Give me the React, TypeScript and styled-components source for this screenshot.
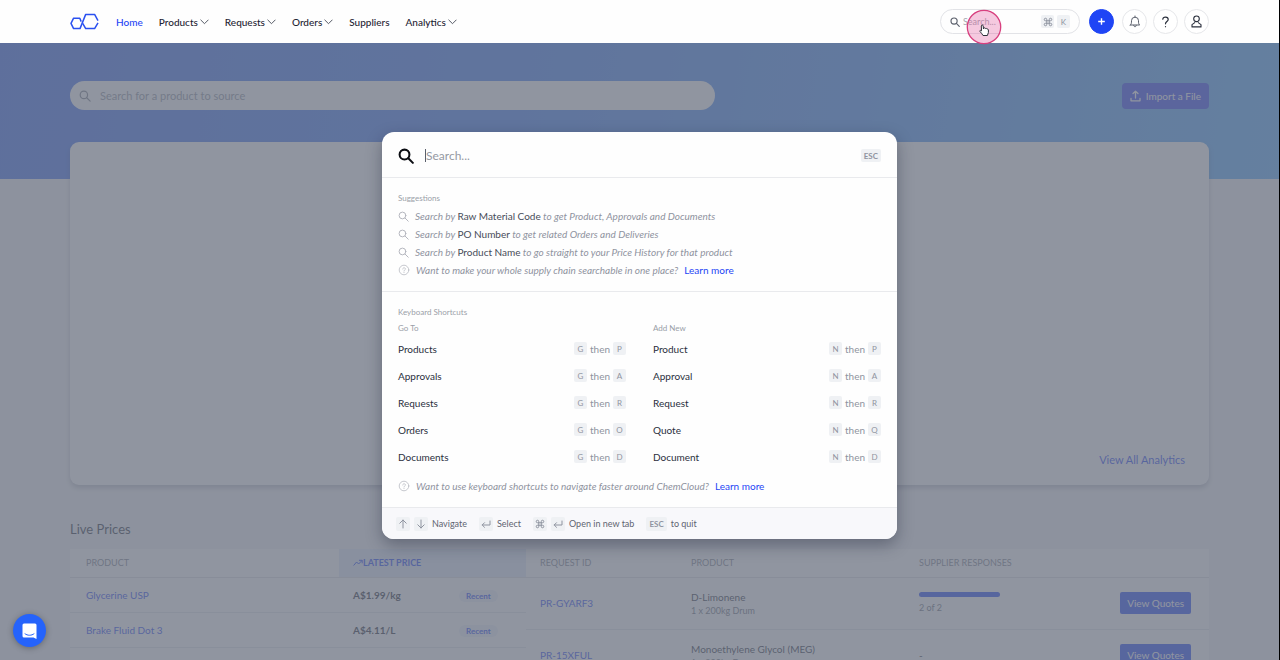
import React from "react";
import styled, { createGlobalStyle, css } from "styled-components";

const brand = "#1f45f5";

const GlobalStyle = createGlobalStyle`
  *, *::before, *::after { box-sizing: border-box; }
  html, body { margin: 0; padding: 0; }
  body {
    font-family: Lato, "Liberation Sans", sans-serif;
    font-size: 10px;
    line-height: 14px;
    color: #2a2f3d;
    background: #f3f4f6;
  }
  button, input { font-family: inherit; }
  a { text-decoration: none; color: inherit; }
`;

const Page = styled.div`
  position: relative;
  height: 100vh;
  overflow: hidden;
  border-right: 1px solid #000;
`;

/* ---------- top bar ---------- */

const TopBar = styled.header`
  display: flex;
  align-items: center;
  height: 43px;
  padding: 0 70px;
  background: #fefefe;
`;

const LogoLink = styled.a`
  display: flex;
  margin-right: 17px;
`;

const Nav = styled.nav`
  display: flex;
  align-items: center;
  gap: 16px;
  flex: 1;
`;

const NavLink = styled.a<{ $active?: boolean }>`
  display: flex;
  align-items: center;
  gap: 2px;
  font-size: 10px;
  font-weight: 500;
  color: ${(p) => (p.$active ? brand : "#1f2433")};
`;

const Tools = styled.div`
  display: flex;
  align-items: center;
  gap: 6px;
`;

const QuickSearch = styled.label`
  display: flex;
  align-items: center;
  gap: 3px;
  width: 140px;
  height: 25px;
  margin-right: 3px;
  padding: 0 9px;
  border: 1px solid #e2e3e7;
  border-radius: 13px;
  color: #5b606c;
`;

const QuickInput = styled.input`
  flex: 1;
  min-width: 0;
  padding: 0;
  border: 0;
  outline: 0;
  background: transparent;
  font-size: 9px;
  &::placeholder { color: #a3a7b0; opacity: 1; }
`;

const RoundButton = styled.button<{ $primary?: boolean }>`
  display: flex;
  align-items: center;
  justify-content: center;
  width: 25px;
  height: 25px;
  padding: 0;
  border: 1px solid #e6e7ea;
  border-radius: 50%;
  background: #fff;
  color: #2a2f3c;
  ${(p) =>
    p.$primary &&
    css`
      margin-right: 2px;
      border-color: ${brand};
      background: ${brand};
      color: #fff;
    `}
`;

const Keycap = styled.kbd<{ $wide?: boolean; $large?: boolean }>`
  display: inline-flex;
  align-items: center;
  justify-content: center;
  flex: none;
  min-width: ${(p) => (p.$large ? 14 : 13)}px;
  height: ${(p) => (p.$large ? 14 : 13)}px;
  padding: ${(p) => (p.$wide ? "0 3px" : "0")};
  border-radius: 2px;
  background: #eff1f4;
  color: #8f94a0;
  font-family: inherit;
  font-size: 8px;
  font-weight: ${(p) => (p.$wide ? 700 : 400)};
  line-height: 14px;
`;

/* ---------- dashboard ---------- */

const Dashboard = styled.main`
  padding: 38px 70px 0;
  background: linear-gradient(100deg, #3b6aef 0%, #4280f2 45%, #53aafa 100%) top / 100% 136px no-repeat;
`;

const SourceBar = styled.div`
  display: flex;
  align-items: center;
  justify-content: space-between;
  margin-bottom: 32px;
`;

const SourceSearch = styled.label`
  display: flex;
  align-items: center;
  gap: 9px;
  width: 645px;
  height: 29px;
  padding: 0 9px;
  border-radius: 15px;
  background: #fff;
  color: #7c818d;
`;

const SourceInput = styled.input`
  flex: 1;
  padding: 0;
  border: 0;
  outline: 0;
  background: transparent;
  font-size: 11px;
  &::placeholder { color: #8f95a1; opacity: 1; }
`;

const ImportButton = styled.button`
  display: flex;
  align-items: center;
  gap: 5px;
  height: 26px;
  padding: 0 8px;
  border: 0;
  border-radius: 4px;
  background: #2c40f2;
  color: #fff;
  font-size: 10px;
`;

const AnalyticsCard = styled.section`
  display: flex;
  align-items: flex-end;
  justify-content: flex-end;
  min-height: 343px;
  padding: 17px 24px;
  border-radius: 9px;
  background: #fff;
  box-shadow: 0 3px 5px rgba(20, 25, 50, 0.25);
`;

const AnalyticsLink = styled.a`
  font-size: 11px;
  line-height: 16px;
  color: ${brand};
`;

const SectionTitle = styled.h2`
  margin: 34px 0 10px;
  font-size: 13px;
  font-weight: 400;
  line-height: 20px;
`;

const Tables = styled.div`
  display: grid;
  grid-template-columns: 456fr 683fr;
`;

const Table = styled.table`
  width: 100%;
  height: 0;
  border-collapse: collapse;
  table-layout: fixed;
  background: #fff;
`;

const HeadCell = styled.th<{ $active?: boolean }>`
  height: 28px;
  padding: 0 14px 0 ${(p) => (p.$active ? 14 : 16)}px;
  border-bottom: 1px solid #dddfe4;
  background: ${(p) => (p.$active ? "#e3e9fb" : "transparent")};
  color: ${(p) => (p.$active ? brand : "#7c818d")};
  font-size: 9px;
  font-weight: ${(p) => (p.$active ? 700 : 400)};
  text-align: left;
  text-transform: uppercase;
`;

const HeadLabel = styled.span`
  display: flex;
  align-items: center;
`;

const Cell = styled.td<{ $tall?: boolean; $end?: boolean; $first?: boolean }>`
  height: ${(p) => (p.$tall ? 52 : 35)}px;
  padding: 0 ${(p) => (p.$end ? 18 : 14)}px 0 ${(p) => (p.$first ? 16 : 14)}px;
  border-bottom: 1px solid #e3e5e9;
  text-align: ${(p) => (p.$end ? "right" : "left")};
`;

const RequestHead = styled(HeadCell)`
  padding-left: 14px;
`;

const ItemLink = styled.a`
  color: ${brand};
`;

const Price = styled.strong`
  font-weight: 700;
  color: #2a2e3a;
`;

const Pill = styled.span`
  display: inline-block;
  padding: 0 7px;
  border-radius: 6px;
  background: #eef2fc;
  color: ${brand};
  font-size: 8px;
  font-weight: 700;
  line-height: 12px;
`;

const Subtext = styled.div`
  color: #6b707c;
  font-size: 9px;
  line-height: 13px;
`;

const Bar = styled.div`
  width: 81px;
  height: 5px;
  margin-bottom: 4px;
  border-radius: 3px;
  background: ${brand};
`;

const QuoteButton = styled.button`
  height: 22px;
  padding: 0 7px;
  border: 0;
  border-radius: 2px;
  background: ${brand};
  color: #fff;
  font-size: 10px;
`;

/* ---------- command palette ---------- */

const Overlay = styled.div`
  position: absolute;
  inset: 43px 0 0;
  display: flex;
  align-items: flex-start;
  justify-content: center;
  padding-top: 89px;
  background: rgba(107, 114, 128, 0.75);
`;

const Palette = styled.div`
  width: 515px;
  overflow: hidden;
  border-radius: 12px;
  background: #fefefe;
  box-shadow: 0 6px 16px rgba(20, 26, 45, 0.35);
`;

const PaletteHead = styled.div`
  display: flex;
  align-items: center;
  gap: 11px;
  height: 46px;
  padding: 2px 16px 0;
  border-bottom: 1px solid #e9eaed;
`;

const PaletteLabel = styled.label`
  display: flex;
  align-items: center;
  flex: 1;
  color: #0b0d12;
`;

const Caret = styled.span`
  width: 1px;
  height: 13px;
  margin-left: 11px;
  background: #5b606c;
`;

const PaletteInput = styled.input`
  flex: 1;
  padding: 0;
  border: 0;
  outline: 0;
  background: transparent;
  font-size: 12px;
  &::placeholder { color: #9599a3; opacity: 1; }
`;

const Section = styled.section`
  padding: 12px 16px;
  border-bottom: 1px solid #e9eaed;
`;

const GroupTitle = styled.h3`
  margin: 0;
  color: #9a9ea8;
  font-size: 8px;
  font-weight: 400;
  line-height: 17px;
`;

const ColumnTitle = styled.h4`
  margin: 0;
  color: #9a9ea8;
  font-size: 8px;
  font-weight: 400;
  line-height: 14px;
`;

const Hint = styled.p`
  display: flex;
  align-items: center;
  gap: 6px;
  height: 18px;
  margin: 0;
  color: #b0b3bb;
  font-size: 10px;
  font-style: italic;
`;

const HintText = styled.span`
  white-space: pre;
  color: #8f939e;
`;

const Term = styled.span`
  color: #474c59;
  font-style: normal;
`;

const LearnMore = styled.a`
  color: ${brand};
  font-style: normal;
`;

const Columns = styled.div`
  display: grid;
  grid-template-columns: 1fr 1fr;
  column-gap: 27px;
  padding-bottom: 7px;
`;

const ShortcutRow = styled.div`
  display: flex;
  align-items: center;
  justify-content: space-between;
  height: 27px;
  font-size: 10px;
`;

const Combo = styled.span`
  display: flex;
  align-items: center;
  gap: 3px;
  color: #8f94a0;
`;

const PaletteFoot = styled.footer`
  display: flex;
  align-items: center;
  gap: 12px;
  height: 31px;
  padding: 0 14px;
  background: #f8f8fb;
  color: #5f6471;
  font-size: 9px;
`;

const FootItem = styled.span`
  display: flex;
  align-items: center;
  gap: 4px;
`;

/* ---------- floating items ---------- */

const ChatButton = styled.button`
  position: absolute;
  left: 13px;
  bottom: 13px;
  display: flex;
  align-items: center;
  justify-content: center;
  width: 33px;
  height: 33px;
  padding: 0;
  border: 0;
  border-radius: 50%;
  background: #2563fb;
  box-shadow: 0 1px 6px rgba(0, 0, 0, 0.3);
`;

const Pointer = styled.div`
  position: absolute;
  top: 9px;
  right: 277px;
  width: 36px;
  height: 36px;
  pointer-events: none;
`;

/* ---------- icons ---------- */

const Logo = () => (
  <svg width="29" height="17" viewBox="0 0 29 17" fill="none" stroke="#2a50f0" strokeWidth="1.5" strokeLinejoin="round" aria-hidden="true">
    <path d="M11.2 8.6 9.8 5.2H3.6L1 10.3l2.6 5.3H10L15.7 1.4h8.9L28 7.6" />
    <path d="m12.7 10.4 3 5.2h8.9L28 9.8" />
  </svg>
);

const Chevron = () => (
  <svg width="9" height="6" viewBox="0 0 9 6" fill="none" stroke="#555a66" strokeWidth="1" strokeLinecap="round" aria-hidden="true">
    <path d="M.8 1 4.5 4.7 8.2 1" />
  </svg>
);

const Magnifier = ({ size, weight }: { size: number; weight: number }) => (
  <svg width={size} height={size} viewBox="0 0 14 14" fill="none" stroke="currentColor" strokeWidth={weight} strokeLinecap="round" aria-hidden="true">
    <circle cx="5.7" cy="5.7" r="4.3" />
    <path d="m9 9 4 4" />
  </svg>
);

const Question = () => (
  <svg width="12" height="12" viewBox="0 0 12 12" fill="none" stroke="#b7bac2" strokeWidth=".8" strokeLinecap="round" aria-hidden="true">
    <circle cx="6" cy="6" r="4.8" />
    <path d="M4.7 5c0-1.7 2.7-1.7 2.7 0C7.4 6 6 6 6 7M6 8.4v.1" />
  </svg>
);

const Plus = () => (
  <svg width="9" height="9" viewBox="0 0 9 9" stroke="currentColor" strokeWidth="1.4" aria-hidden="true">
    <path d="M4.5 1.2v6.6M1.2 4.5h6.6" />
  </svg>
);

const Bell = () => (
  <svg width="12" height="13" viewBox="0 0 12 13" fill="none" stroke="#5b606c" strokeWidth="1" strokeLinejoin="round" strokeLinecap="round" aria-hidden="true">
    <path d="M6 1v1M1.3 10h9.4C9.5 9 9.5 8 9.5 5.7a3.5 3.5 0 0 0-7 0C2.5 8 2.5 9 1.3 10ZM4.7 10.3c0 2 2.6 2 2.6 0" />
  </svg>
);

const HelpMark = () => (
  <svg width="9" height="12" viewBox="0 0 9 12" fill="none" stroke="currentColor" strokeWidth="1.2" strokeLinecap="round" aria-hidden="true">
    <path d="M1.8 3.2c.3-2.8 5.4-2.7 5.4.3C7.2 5.5 4.5 5.6 4.5 7.8M4.5 10.5v.2" />
  </svg>
);

const Person = () => (
  <svg width="13" height="13" viewBox="0 0 13 13" fill="none" stroke="currentColor" strokeWidth="1.1" strokeLinejoin="round" aria-hidden="true">
    <circle cx="6.5" cy="3.8" r="2.8" />
    <path d="M5.1 7.4 2 9.6v2.3h9V9.6L7.900 7.400" />
  </svg>
);

const Upload = () => (
  <svg width="11" height="12" viewBox="0 0 11 12" fill="none" stroke="currentColor" strokeWidth="1.3" strokeLinecap="round" strokeLinejoin="round" aria-hidden="true">
    <path d="M5.5 8V1.3M3 3.5l2.5-2.3L8 3.5M1 8.5v2.3h9V8.5" />
  </svg>
);

const Trend = () => (
  <svg width="10" height="8" viewBox="0 0 10 8" fill="none" stroke="currentColor" strokeWidth="1" aria-hidden="true">
    <path d="m.6 6.5 3-3.5 2 2L9 1.5M6 1.3h3.2v3" />
  </svg>
);

const Command = () => (
  <svg width="10" height="10" viewBox="0 0 24 24" fill="none" stroke="currentColor" strokeWidth="2.4" aria-hidden="true">
    <path d="M15 6v12a3 3 0 1 0 3-3H6a3 3 0 1 0 3 3V6a3 3 0 1 0-3 3h12a3 3 0 1 0-3-3" />
  </svg>
);

const Arrow = ({ down }: { down?: boolean }) => (
  <svg width="10" height="10" viewBox="0 0 10 10" fill="none" stroke="currentColor" strokeWidth="1" strokeLinecap="round" aria-hidden="true">
    <path d={down ? "M5 1v8M1.8 5.8 5 9l3.2-3.2" : "M5 9V1M1.8 4.2 5 1l3.2 3.2"} />
  </svg>
);

const Enter = () => (
  <svg width="10" height="10" viewBox="0 0 10 10" fill="none" stroke="currentColor" strokeWidth="1" strokeLinecap="round" aria-hidden="true">
    <path d="M9 2v4H1.2M3.5 3.7 1.2 6l2.3 2.3" />
  </svg>
);

const ChatIcon = () => (
  <svg width="15" height="16" viewBox="0 0 15 16" aria-hidden="true">
    <path d="M2 .5h11a1.5 1.5 0 0 1 1.5 1.5v14L11.5 14.5H2A1.5 1.5 0 0 1 .5 13V2A1.5 1.5 0 0 1 2 .5Z" fill="#fff" />
    <path d="M3 10.8c2.5 2 6.500 2 9 0" fill="none" stroke="#2563fb" strokeWidth="1" strokeLinecap="round" />
  </svg>
);

const PointerMark = () => (
  <svg width="36" height="36" viewBox="0 0 36 36" aria-hidden="true">
    <circle cx="18" cy="18" r="16.7" fill="rgba(226, 90, 160, 0.32)" stroke="#d8407f" strokeWidth="1.3" />
    <path d="M15.3 17c0-1.3 1.8-1.3 1.9 0l.3 3 .2-.8c.5-.7 1.6-.4 1.7.4.5-.5 1.5-.2 1.6.5.6-.3 1.4.1 1.4.9v2.5l-1 3H17c-.8-1.7-2-2.7-3-4-.6-1 .5-1.6 1.500-.7Z" fill="#fff" stroke="#2c3038" strokeWidth="1" strokeLinejoin="round" />
  </svg>
);

/* ---------- data ---------- */

const navItems = [
  { label: "Home", menu: false },
  { label: "Products", menu: true },
  { label: "Requests", menu: true },
  { label: "Orders", menu: true },
  { label: "Suppliers", menu: false },
  { label: "Analytics", menu: true },
];

const suggestions = [
  { term: "Raw Material Code", rest: "to get Product, Approvals and Documents" },
  { term: "PO Number", rest: "to get related Orders and Deliveries" },
  { term: "Product Name", rest: "to go straight to your Price History for that product" },
];

const shortcutGroups = [
  {
    title: "Go To",
    lead: "G",
    items: ["Products", "Approvals", "Requests", "Orders", "Documents"],
  },
  {
    title: "Add New",
    lead: "N",
    items: ["Product", "Approval", "Request", "Quote", "Document"],
  },
];

const prices = [
  { name: "Glycerine USP", price: "A$1.99/kg" },
  { name: "Brake Fluid Dot 3", price: "A$4.11/L" },
  { name: "", price: "" },
];

const requests = [
  { id: "PR-GYARF3", product: "D-Limonene", amount: "1 x 200kg Drum", responses: "2 of 2" },
  { id: "PR-15XFUL", product: "Monoethylene Glycol (MEG)", amount: "1 x 200kg Drum", responses: "" },
];

export default function App() {
  return (
    <Page>
      <GlobalStyle />
      <TopBar>
        <LogoLink href="#" aria-label="ChemCloud">
          <Logo />
        </LogoLink>
        <Nav>
          {navItems.map((item) => (
            <NavLink key={item.label} href="#" $active={item.label === "Home"}>
              {item.label}
              {item.menu && <Chevron />}
            </NavLink>
          ))}
        </Nav>
        <Tools>
          <QuickSearch>
            <Magnifier size={10} weight={1.6} />
            <QuickInput placeholder="Search..." aria-label="Search" />
            <Keycap><Command /></Keycap>
            <Keycap>K</Keycap>
          </QuickSearch>
          <RoundButton $primary aria-label="Add"><Plus /></RoundButton>
          <RoundButton aria-label="Notifications"><Bell /></RoundButton>
          <RoundButton aria-label="Help"><HelpMark /></RoundButton>
          <RoundButton aria-label="Account"><Person /></RoundButton>
        </Tools>
      </TopBar>

      <Dashboard>
        <SourceBar>
          <SourceSearch>
            <Magnifier size={12} weight={1.4} />
            <SourceInput placeholder="Search for a product to source" aria-label="Search for a product to source" />
          </SourceSearch>
          <ImportButton><Upload />Import a File</ImportButton>
        </SourceBar>
        <AnalyticsCard>
          <AnalyticsLink href="#">View All Analytics</AnalyticsLink>
        </AnalyticsCard>
        <SectionTitle>Live Prices</SectionTitle>
        <Tables>
          <Table>
            <colgroup>
              <col />
              <col width="106" />
              <col width="81" />
            </colgroup>
            <thead>
              <tr>
                <HeadCell>Product</HeadCell>
                <HeadCell $active colSpan={2}>
                  <HeadLabel><Trend />Latest Price</HeadLabel>
                </HeadCell>
              </tr>
            </thead>
            <tbody>
              {prices.map((row, i) => (
                <tr key={i}>
                  <Cell $first><ItemLink href="#">{row.name}</ItemLink></Cell>
                  <Cell><Price>{row.price}</Price></Cell>
                  <Cell><Pill>Recent</Pill></Cell>
                </tr>
              ))}
            </tbody>
          </Table>
          <Table>
            <colgroup>
              <col width="151" />
              <col width="228" />
              <col width="150" />
              <col />
            </colgroup>
            <thead>
              <tr>
                <RequestHead>Request ID</RequestHead>
                <RequestHead>Product</RequestHead>
                <RequestHead>Supplier Responses</RequestHead>
                <RequestHead aria-label="Actions" />
              </tr>
            </thead>
            <tbody>
              {requests.map((row) => (
                <tr key={row.id}>
                  <Cell $tall><ItemLink href="#">{row.id}</ItemLink></Cell>
                  <Cell $tall>
                    {row.product}
                    <Subtext>{row.amount}</Subtext>
                  </Cell>
                  <Cell $tall>
                    {row.responses ? (
                      <>
                        <Bar />
                        <Subtext>{row.responses}</Subtext>
                      </>
                    ) : (
                      "-"
                    )}
                  </Cell>
                  <Cell $tall $end><QuoteButton>View Quotes</QuoteButton></Cell>
                </tr>
              ))}
            </tbody>
          </Table>
        </Tables>
      </Dashboard>

      <Overlay>
        <Palette role="dialog" aria-label="Search">
          <PaletteHead>
            <PaletteLabel>
              <Magnifier size={16} weight={1.8} />
              <Caret />
              <PaletteInput placeholder="Search..." aria-label="Search everything" />
            </PaletteLabel>
            <Keycap $wide>ESC</Keycap>
          </PaletteHead>

          <Section>
            <GroupTitle>Suggestions</GroupTitle>
            {suggestions.map((s) => (
              <Hint key={s.term}>
                <Magnifier size={11} weight={1.2} />
                <HintText>
                  Search by <Term>{s.term}</Term> {s.rest}
                </HintText>
              </Hint>
            ))}
            <Hint>
              <Question />
              <HintText>Want to make your whole supply chain searchable in one place?</HintText>
              <LearnMore href="#">Learn more</LearnMore>
            </Hint>
          </Section>

          <Section>
            <GroupTitle>Keyboard Shortcuts</GroupTitle>
            <Columns>
              {shortcutGroups.map((group) => (
                <div key={group.title}>
                  <ColumnTitle>{group.title}</ColumnTitle>
                  {group.items.map((item) => (
                    <ShortcutRow key={item}>
                      {item}
                      <Combo>
                        <Keycap>{group.lead}</Keycap>
                        then
                        <Keycap>{item[0]}</Keycap>
                      </Combo>
                    </ShortcutRow>
                  ))}
                </div>
              ))}
            </Columns>
            <Hint>
              <Question />
              <HintText>Want to use keyboard shortcuts to navigate faster around ChemCloud?</HintText>
              <LearnMore href="#">Learn more</LearnMore>
            </Hint>
          </Section>

          <PaletteFoot>
            <FootItem>
              <Keycap $large><Arrow /></Keycap>
              <Keycap $large><Arrow down /></Keycap>
              Navigate
            </FootItem>
            <FootItem>
              <Keycap $large><Enter /></Keycap>
              Select
            </FootItem>
            <FootItem>
              <Keycap $large><Command /></Keycap>
              <Keycap $large><Enter /></Keycap>
              Open in new tab
            </FootItem>
            <FootItem>
              <Keycap $large $wide>ESC</Keycap>
              to quit
            </FootItem>
          </PaletteFoot>
        </Palette>
      </Overlay>

      <ChatButton aria-label="Open chat"><ChatIcon /></ChatButton>
      <Pointer><PointerMark /></Pointer>
    </Page>
  );
}
